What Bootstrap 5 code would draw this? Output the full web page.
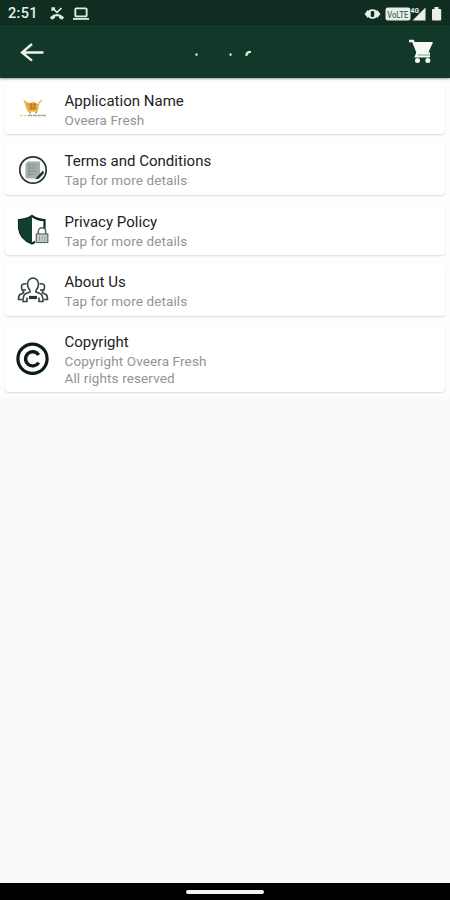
<!DOCTYPE html>
<html lang="en">
<head>
<meta charset="utf-8">
<meta name="viewport" content="width=device-width, initial-scale=1">
<title>Oveera Fresh</title>
<link rel="stylesheet" href="https://cdn.jsdelivr.net/npm/bootstrap@5.3.0/dist/css/bootstrap.min.css">
<style>
body{font-family:Roboto,"Liberation Sans",sans-serif;background:#fafafa;height:900px;overflow:hidden}
svg{display:block;flex:none}
.status-bar{height:25px;background:#0f2d20;color:#e6f0e8;padding:2px 7px 0 8px}
.clock{font-size:14.5px;font-weight:500;line-height:24px;width:41px;letter-spacing:.3px}
.app-bar{height:53px;background:#113828;padding:0 16px 0 20px;box-shadow:0 1px 2px #0006}
.title-marks{margin-left:-7px}
.info-list{background:#fdfdfd;padding:6px 5px;gap:10px}
.info-item{border:0;border-radius:4px;height:50.4px;box-shadow:0 1px 2px #00000024;padding:0 12px 0 10px}
.info-item.tall{height:66px}
.icon-slot{width:35px;margin-right:14.5px}
.item-copy{padding-top:2px}
.item-title{font-size:15px;line-height:18px;color:#222;letter-spacing:.02px}
.item-text{font-size:13.5px;line-height:16.5px;color:#939393;letter-spacing:.12px;margin-top:2px}
.nav-strip{height:17px;background:#000}
.home-pill{width:78px;height:4px;background:#f4f4f4;margin-top:1px}
</style>
<script src="https://cdn.jsdelivr.net/npm/bootstrap@5.3.0/dist/js/bootstrap.bundle.min.js"></script>
</head>
<body class="d-flex flex-column">
<div class="status-bar d-flex align-items-center flex-shrink-0">
  <span class="clock">2:51</span>
  <svg width="16" height="16" viewBox="0 0 16 16" fill="none" stroke="#dfebe1"><path d="M3.5 2.2 8 6.300l4.500-4.300M3.300 5V2.200H6" stroke-width="1.700"/><path d="M.8 11.500Q8 4.600 15.200 11.500l-2.200 2.300-3-1.900v-1.400Q8 9.900 6 10.500v1.400l-3 1.900z" fill="#dfebe1" stroke="none"/></svg>
  <svg class="ms-2" width="16" height="16" viewBox="0 0 17 16" fill="none" stroke="#dfebe1"><rect x="2.500" y="2" width="12" height="8.500" rx="1" stroke-width="2"/><path d="M0 13.200h17" stroke-width="2"/></svg>
  <svg class="ms-auto" width="17" height="14" viewBox="0 0 17 14"><path d="M.5 7 4 2.800v8.400zM16.500 7 13 2.800v8.400z" fill="#e6f0e8"/><ellipse cx="8.500" cy="7" rx="5.500" ry="4.800" fill="#e6f0e8"/><rect x="6.800" y="3.900" width="3.400" height="6.200" rx="1.400" fill="#0f2d20"/></svg>
  <svg class="ms-1" width="42" height="16" viewBox="0 0 42 16"><rect x=".5" y="1.500" width="25" height="13" rx="2.500" fill="#e6f0e8"/><text x="2.300" y="12.200" font-size="9.500" font-weight="500" textLength="21" lengthAdjust="spacingAndGlyphs" fill="#526d5f">VoLTE</text><path d="M40.500 1.500v13H27.500z" fill="#e6f0e8"/><text x="25.600" y="6.500" font-size="7" font-weight="700" fill="#e6f0e8" stroke="#0f2d20" stroke-width="1" paint-order="stroke" textLength="8.500" lengthAdjust="spacingAndGlyphs">4G</text></svg>
  <svg class="ms-1" width="12" height="16" viewBox="0 0 12 16"><path d="M3.500 3V1h4v2h1.700q1 0 1 1v9.500q0 1-1 1H2q-1 0-1-1V4q0-1 1-1z" fill="#e6f0e8"/></svg>
</div>
<header class="app-bar d-flex align-items-center justify-content-between flex-shrink-0 position-relative">
  <svg width="25" height="22" viewBox="0 0 25 22" fill="none" stroke="#eef5ef" stroke-width="2.300"><path d="M23.500 11.500H2M12 3 2 11.500l10 8.200"/></svg>
  <svg class="title-marks" width="60" height="8" viewBox="0 0 60 8" fill="none" stroke="#dceadf" stroke-linecap="round"><path d="M3.500 6.800v-.5M37.500 6.800v-.5" stroke-width="2.300"/><path d="M53.500 7q0-2.800 3.500-3.200" stroke-width="2.200"/></svg>
  <svg width="26" height="25" viewBox="0 0 26 25"><path d="M1 2h4l5 12.500h12" fill="none" stroke="#f5faf5" stroke-width="2.300"/><path d="M5 3h19q1 0 .6 1.200l-4 8.800q-.5 1-1.600 1H9.500z" fill="#f5faf5"/><path d="M9.800 13 8 17.300h14" fill="none" stroke="#f5faf5" stroke-width="2.300"/><circle cx="9.500" cy="21.500" r="2.500" fill="#f5faf5"/><circle cx="19.800" cy="21.500" r="2.500" fill="#f5faf5"/></svg>
</header>
<main class="info-list d-flex flex-column">
  <div class="card info-item flex-row align-items-center">
    <div class="icon-slot d-flex justify-content-center"><svg width="32" height="24" viewBox="0 0 32 24"><path d="M8 4l4 2 5-1 4 2-1 7H11z" fill="#e6a646"/><path d="M7 3l4 11h9l2-8 3-3" fill="none" stroke="#e8bd48" stroke-width="1.300"/><path d="M12 8h7M12 11h7M14 6l1 7M18 6l-1 7" stroke="#c96d25"/><circle cx="13" cy="15.500" r="1" fill="#d88b28"/><circle cx="19" cy="15.500" r="1" fill="#d88b28"/><path d="M3 18.500h8" stroke="#e2ca7c" stroke-width="1.100" stroke-dasharray="3 1"/><path d="M11 18.500h18" stroke="#a5a098" stroke-width="1.300" stroke-dasharray="4 .7"/></svg></div>
    <div class="item-copy"><div class="item-title">Application Name</div><div class="item-text">Oveera Fresh</div></div>
  </div>
  <div class="card info-item flex-row align-items-center">
    <div class="icon-slot d-flex justify-content-center"><svg width="30" height="30" viewBox="0 0 30 30"><circle cx="15" cy="15" r="13.200" fill="#fafcfb" stroke="#26352f" stroke-width="1.700"/><path d="M10 6.500h12v14l-3.500 3H10q-2.500 0-2.500-2.500V9z" fill="#a5b0ac"/><path d="M11.500 10h7M11.500 13h7M11.500 16h7M11.500 19h5M11 8v13" stroke="#81908a"/><path d="M25 15.500l-5.500 6-2.500 2.800 4-.7 5-5.500z" fill="#192f26"/></svg></div>
    <div class="item-copy"><div class="item-title">Terms and Conditions</div><div class="item-text">Tap for more details</div></div>
  </div>
  <div class="card info-item flex-row align-items-center">
    <div class="icon-slot d-flex justify-content-center"><svg width="32" height="32" viewBox="0 0 32 32"><path d="M15 2Q20.500 6 27.500 6v10q-2 9-12.500 13.500Q3.500 25 2 14V6Q9.500 6 15 2z" fill="#fff" stroke="#10291f" stroke-width="2.200"/><path d="M15 1.500V29.500Q3.500 25 2 14V6Q9.500 6 15 1.500z" fill="#12402e"/><path d="M18 19.500h14V31H18z" fill="#fff"/><path d="M21.300 20v-2.500a3.700 3.700 0 0 1 7.400 0V20" fill="#fff" stroke="#53665d" stroke-width="1.500"/><rect x="19.300" y="20" width="11.500" height="8.500" fill="#cbd2ce" stroke="#586a62" stroke-width="1.200"/><path d="M22.500 22v5M25.200 22v5M28 22v5" stroke="#8d9a94"/></svg></div>
    <div class="item-copy"><div class="item-title">Privacy Policy</div><div class="item-text">Tap for more details</div></div>
  </div>
  <div class="card info-item flex-row align-items-center">
    <div class="icon-slot d-flex justify-content-center"><svg width="32" height="28" viewBox="0 0 32 28" fill="none" stroke="#31463c" stroke-width="1.600"><path d="M13 14.500Q10.500 12 10.500 8a5.500 6 0 0 1 11 0q0 4-2.500 6.500v1.500l4 1.500q3 1 3 8h-4v-4M10 21.500v4H6q0-7 3-8l4-1.500v-1.500"/><path d="M9.500 8Q4 7 4.500 11.500q0 2.500 2 4V17L3 18.500Q1.500 19.500 1.500 23.500H5M22.500 8Q28 7 27.500 11.500q0 2.500-2 4V17l3.500 1.500q1.500 1 1.500 5H27"/><path d="M5 14h4M23 14h4"/><path d="M12 21.500h8" stroke="#263a31" stroke-width="3.200"/></svg></div>
    <div class="item-copy"><div class="item-title">About Us</div><div class="item-text">Tap for more details</div></div>
  </div>
  <div class="card info-item tall flex-row align-items-center">
    <div class="icon-slot d-flex justify-content-center"><svg width="34" height="34" viewBox="0 0 34 34" fill="none" stroke="#0d1d16"><circle cx="16.500" cy="16.800" r="14.600" stroke-width="3.200"/><path d="M22.700 13a7.100 7.100 0 1 0 0 7.600" stroke-width="3.400"/></svg></div>
    <div class="item-copy"><div class="item-title">Copyright</div><div class="item-text">Copyright Oveera Fresh<br>All rights reserved</div></div>
  </div>
</main>
<footer class="nav-strip mt-auto d-flex justify-content-center align-items-center flex-shrink-0"><div class="home-pill rounded-pill"></div></footer>
</body>
</html>
